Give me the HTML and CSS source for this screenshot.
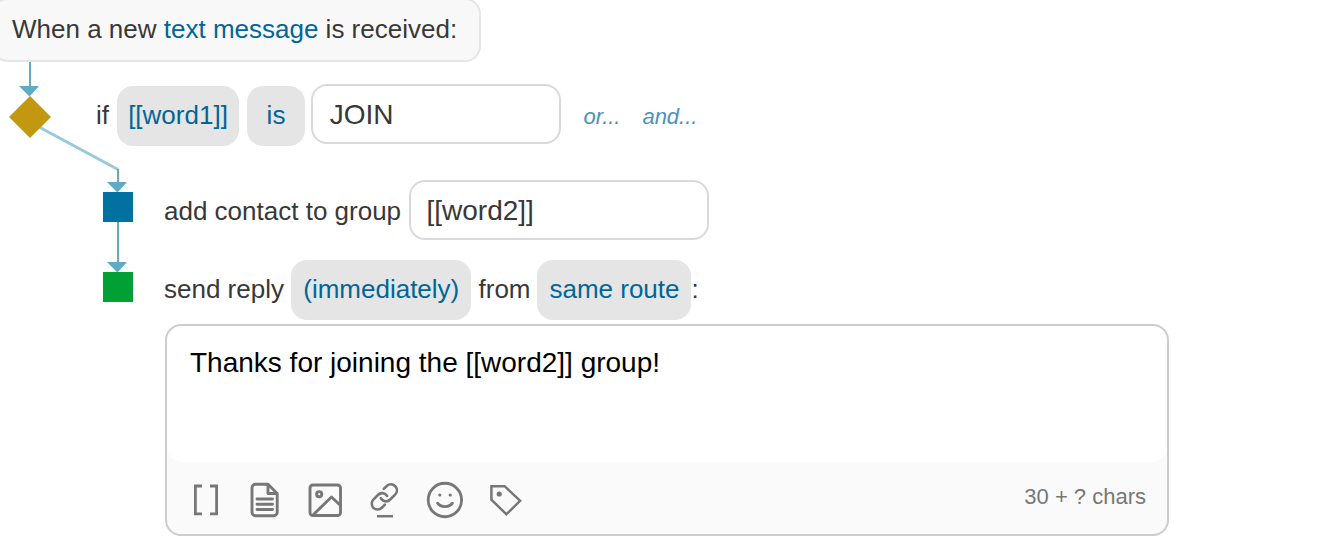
FILE: index.html
```html
<!DOCTYPE html>
<html lang="en">
<head>
<meta charset="utf-8">
<title>Text message rule</title>
<link rel="stylesheet" href="styles.css">
</head>
<body>
<main class="rule">
  <header class="trigger">When a new <a class="link">text message</a> is received:</header>

  <svg class="connectors" width="160" height="310" viewBox="0 0 160 310" aria-hidden="true">
    <path class="branch" d="M39 127L118 169.500"/>
    <path class="line" d="M30 62V88M118 169V184M118 222V264"/>
    <path class="arrow" d="M19 86h20l-9.500 10.500zM107 182h20l-9.500 10.500zM107 262h20l-9.500 10.500z"/>
    <path class="condition-node" d="M30 96l21 21-21 21-21-21z"/>
    <path class="group-node" d="M103 192h30v30h-30z"/>
    <path class="reply-node" d="M103 272h30v30h-30z"/>
  </svg>

  <section class="row condition">
    <span class="label label-if">if</span>
    <a class="pill pill-word">[[word1]]</a>
    <a class="pill pill-is">is</a>
    <div class="field field-value">JOIN</div>
    <a class="add add-or">or...</a>
    <a class="add add-and">and...</a>
  </section>

  <section class="row action group-action">
    <span class="label label-group">add contact to group</span>
    <div class="field field-group">[[word2]]</div>
  </section>

  <section class="row action reply-action">
    <span class="label label-reply">send reply</span>
    <a class="pill pill-time">(immediately)</a>
    <span class="label label-from">from</span>
    <a class="pill pill-route">same route</a>
    <span class="label label-colon">:</span>
  </section>

  <section class="editor">
    <div class="message">Thanks for joining the [[word2]] group!</div>
    <footer class="toolbar">
      <svg class="tools" width="340" height="48" viewBox="187 476 340 48" aria-hidden="true">
        <path class="brackets" d="M202 486h-6.600v27.800h6.600M210 486h6.600v27.800H210"/>
        <g class="heavy">
          <path d="M255.500 484.300h12.500l9.200 9.200v18.700a3.500 3.500 0 0 1-3.500 3.500h-18.200a3.500 3.500 0 0 1-3.500-3.500v-24.400a3.500 3.500 0 0 1 3.500-3.500zM268 484.300v9.200h9.200M257 499h15.500M257 504.200h15.500M257 509.500h15.500"/>
          <rect x="310" y="485" width="30.500" height="30.500" rx="3"/>
          <circle cx="319.200" cy="494.200" r="2.600"/>
          <path d="M313.500 514.500L331.500 497l9 8.500"/>
          <circle cx="444.900" cy="500" r="16.700"/>
          <path d="M437.600 503.200c3.200 4.600 11.600 4.600 14.800 0"/>
        </g>
        <path class="chain" d="M383.800 488.900l3-2.900c2.600-2.300 6.100-2 8.400.2 2.200 2.300 2.300 5.900.1 8.200l-5.100 5.100c-2.600 2.600-6.500 2.400-8.500-.1l-.8-1.300M387.100 495.900c-2.500-3.600-6.500-3.500-9.200-.9l-4.300 4.300c-2.500 2.500-2.400 6.300-.2 8.500 2.300 2.300 6 2.200 8.400-.1l3.100-3.100"/>
        <path d="M377 516.200h16"/>
        <circle class="dot" cx="439.800" cy="495" r="1.600"/>
        <circle class="dot" cx="450.200" cy="495" r="1.600"/>
        <path d="M491.400 486.200h13.200l15.500 14.600-13.700 13.500-15-14.700z"/>
        <circle class="dot" cx="499.200" cy="494" r="2.600"/>
      </svg>
      <span class="count">30 + ? chars</span>
    </footer>
  </section>
</main>
</body>
</html>
```
FILE: styles.css
```css
* { box-sizing: border-box; }

body {
  margin: 0;
  overflow: hidden;
  background: #fff;
  color: #383838;
  font: 26px/30px "Liberation Sans", Arial, sans-serif;
}

.rule {
  position: relative;
  display: flex;
  flex-direction: column;
  height: 538px;
}

.trigger {
  width: 489px;
  height: 64px;
  margin: -2px 0 0 -8px;
  padding: 14px 18px;
  border: 2px solid #e5e5e5;
  border-radius: 16px;
  background: #f8f8f8;
  white-space: nowrap;
}

.link, .pill { color: #006699; }

.connectors { position: absolute; left: 0; top: 0; }
.connectors path { stroke: none; }
.connectors .line { fill: none; stroke: #5dabc4; stroke-width: 2; }
.connectors .branch { fill: none; stroke: #98cad9; stroke-width: 3; }
.arrow { fill: #5dabc4; }
.condition-node { fill: #c1980f; }
.group-node { fill: #0071a0; }
.reply-node { fill: #00a035; }

.row {
  display: flex;
  align-items: flex-start;
  height: 62px;
  white-space: nowrap;
}

.condition { margin-top: 22px; padding-left: 96px; }
.action { padding-left: 164px; }
.group-action { margin-top: 34px; }
.reply-action { margin-top: 18px; height: 64px; }

.label { padding-top: 16px; }
.label-if { width: 21px; }
.label-group { width: 245px; }
.label-reply { width: 127px; }
.reply-action .label { padding-top: 14px; }
.label-from { width: 66px; padding-left: 7.5px; }
.label-colon { padding-left: 0.5px; }

.pill {
  height: 60px;
  border-radius: 16px;
  background: #e5e5e5;
  line-height: 58px;
  text-align: center;
}

.condition .pill { margin-top: 2px; }
.pill-word { width: 122px; }
.pill-is { width: 58px; margin-left: 8px; }
.pill-time { width: 180px; padding-left: 0.5px; }
.pill-route { width: 154px; padding-left: 1px; }

.field {
  height: 60px;
  padding-left: 15.5px;
  border: 2px solid #d9d9d9;
  border-radius: 16px;
  font-size: 28px;
  line-height: 57px;
}

.field-value { width: 250px; margin-left: 6px; padding-left: 16.700px; }
.field-group { width: 300px; }

.add {
  padding-top: 18px;
  color: #4a93b8;
  font-size: 22px;
  font-style: italic;
}

.add-or { width: 59px; margin-left: 22.4px; }

.editor {
  width: 1004px;
  height: 212px;
  margin-left: 165px;
  overflow: hidden;
  border: 2px solid #ccc;
  border-radius: 16px;
  background: #fafafa;
}

.message {
  height: 136px;
  padding: 21px 23px;
  border-radius: 16px;
  background: #fff;
  color: #000;
  font-size: 28px;
  line-height: 32px;
}

.toolbar {
  display: flex;
  justify-content: space-between;
  padding: 14px 21px 0 20px;
  color: #777;
  font-size: 22px;
}

.count { padding-top: 6px; }

.tools { fill: none; stroke: #777; stroke-width: 2.5; }
.tools .brackets { stroke-width: 2.8; }
.tools .heavy { stroke-width: 2.9; stroke-linecap: round; stroke-linejoin: round; }
.tools .chain { stroke-width: 2.6; stroke-linecap: round; }
.tools .dot { fill: #777; stroke: none; }
```
